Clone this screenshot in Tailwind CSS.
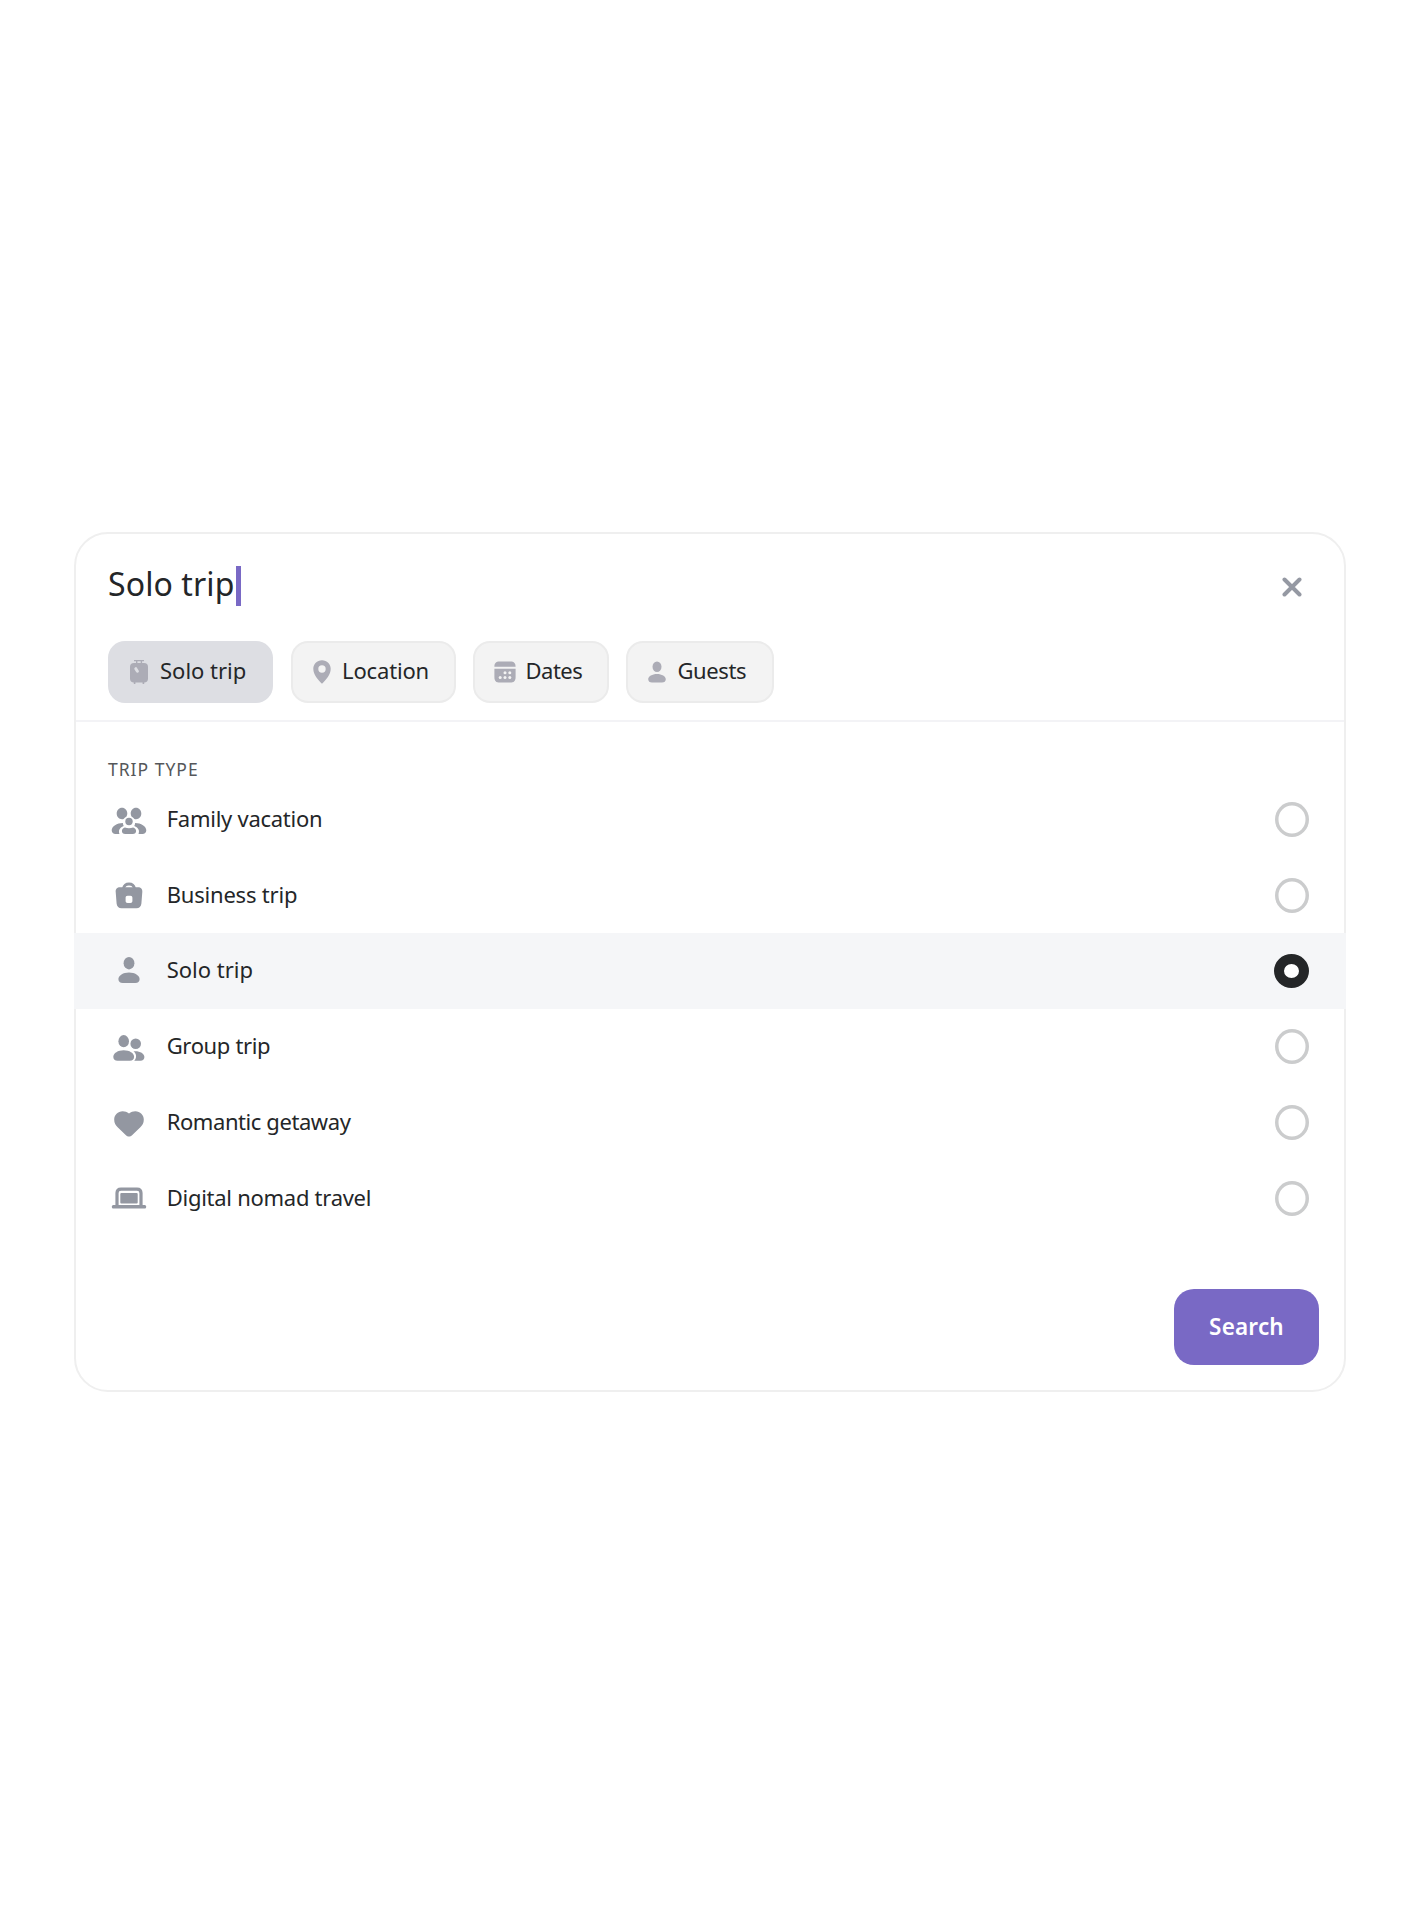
<!DOCTYPE html>
<html lang="en">
<head>
<meta charset="utf-8">
<title>Trip search</title>
<script src="https://cdn.jsdelivr.net/npm/@tailwindcss/browser@4"></script>
</head>
<body class="bg-white font-['Noto_Sans',sans-serif] text-[#242628]">
<main class="h-[1926px] w-[1422px] pl-[74px] pt-[532px]">
<section class="flex h-[860px] w-[1272px] flex-col rounded-[34px] border-2 border-[#efefef]">
  <header class="flex h-[188px] shrink-0 flex-col border-b-2 border-[#f3f3f6] px-8 pt-8">
    <div class="flex h-10 items-center justify-between">
      <div class="flex items-center">
        <span class="-mt-1 w-[128px] whitespace-pre text-[32px] leading-[36px] tracking-[0.1px]">Solo trip</span>
        <span class="h-10 w-[5px] bg-[#7969c5]"></span>
      </div>
      <svg class="mr-[10px] mt-0.5 size-[20px]" viewBox="0 0 20 20" fill="none" stroke="#9599a3" stroke-width="4" stroke-linecap="round"><path d="M2.500 2.500 17.500 17.500M17.500 2.500 2.500 17.500"/></svg>
    </div>
    <nav class="mt-[35px] flex gap-[18px] text-[22px] leading-[58px]">
      <button class="flex h-[62px] w-[165px] items-center rounded-[17px] bg-[#dddee3] pl-[22px]">
        <svg class="h-[26px] w-[18px] shrink-0" viewBox="0 0 18 26" fill="#acacb6"><path d="M4 .9h10v1.300H4zM6 2h1.400v2.500H6zM10.700 2h1.400v2.500h-1.400z"/><path d="M4 4h10a4 4 0 0 1 4 4v11.500a4 4 0 0 1-4 4H4a4 4 0 0 1-4-4V8a4 4 0 0 1 4-4Z"/><path d="m5.800 9.700 1.600 2.500" fill="none" stroke="#dddee3" stroke-width="3" stroke-linecap="round"/><path d="M3.800 23h1.600v2H3.800zM12.600 23h1.600v2h-1.600z"/></svg>
        <span class="-mt-[5px] ml-[12px] whitespace-nowrap">Solo trip</span>
      </button>
      <button class="flex h-[62px] w-[165px] items-center rounded-[17px] border-2 border-[#ebebeb] bg-[#f3f3f3] pl-5">
        <svg class="-mt-px h-[24px] w-[18px] shrink-0" viewBox="0 0 18 24" fill="#acacb6"><path fill-rule="evenodd" d="M9 .3c-5 0-8.700 3.700-8.700 8.500 0 6.200 4.600 10.700 8.700 15 4.100-4.300 8.700-8.800 8.700-15C17.700 4 14 .3 9 .3Zm0 5a3.700 3.700 0 1 1 0 7.400 3.700 3.700 0 0 1 0-7.400Z"/></svg>
        <span class="-mt-[5px] ml-[11px] whitespace-nowrap tracking-[-0.15px]">Location</span>
      </button>
      <button class="-ml-px flex h-[62px] w-[136px] items-center rounded-[17px] border-2 border-[#ebebeb] bg-[#f3f3f3] pl-[18.500px]">
        <svg class="-mt-px size-[22px] shrink-0" viewBox="0 0 22 22" fill="#acacb6"><path d="M.4 5.700C.4 2.500 1.500.5 6 .5h10c4.500 0 5.600 2 5.600 5.200ZM.4 7.700h21.200V16c0 4-1.600 5.600-5.600 5.600H6C2 21.600.4 20 .4 16Z"/><g fill="#f3f3f3"><circle cx="11" cy="11.800" r="1.500"/><circle cx="15.800" cy="11.800" r="1.500"/><circle cx="6.200" cy="16.400" r="1.500"/><circle cx="11" cy="16.400" r="1.500"/><circle cx="15.800" cy="16.400" r="1.500"/></g></svg>
        <span class="-mt-[5px] ml-[10px] whitespace-nowrap tracking-[-0.5px]">Dates</span>
      </button>
      <button class="-ml-px flex h-[62px] w-[148px] items-center rounded-[17px] border-2 border-[#ebebeb] bg-[#f3f3f3] pl-5">
        <svg class="-mt-px h-[22px] w-[18px] shrink-0" viewBox="0 0 18 22" fill="#acacb6"><ellipse cx="9" cy="5.800" rx="4.500" ry="5.300"/><path d="M9 12.900c4.800 0 8.800 2.400 8.800 5.300 0 2-1.500 3.300-3.800 3.300H4C1.700 21.500.2 20.200.2 18.200c0-2.900 4-5.300 8.800-5.300Z"/></svg>
        <span class="-mt-[5px] ml-[11.500px] whitespace-nowrap tracking-[-0.4px]">Guests</span>
      </button>
    </nav>
  </header>

  <h2 class="mt-[37px] h-[23px] shrink-0 pl-8 text-[17.500px] leading-[20px] tracking-[1px] text-[#55575a]">TRIP TYPE</h2>
  <ul class="-mx-[2px] text-[22px]">
    <li class="flex h-[75.700px] items-center pl-[36.700px] pr-[37px]">
      <svg class="size-9" viewBox="0 0 36 36" fill="#9397a1"><path d="M11 5.800c3 0 5.300 2.600 5.300 5.700 0 1.100-.3 2.200-.8 3.100-1.300.7-2.300 1.500-2.900 2.400-3.800 1.100-6.900-1.700-6.900-5.500 0-3.100 2.300-5.700 5.300-5.700ZM25 5.800c-3 0-5.300 2.600-5.300 5.700 0 1.100.3 2.200.8 3.100 1.300.7 2.300 1.500 2.900 2.400 3.800 1.100 6.900-1.700 6.900-5.500 0-3.100-2.300-5.700-5.300-5.700Z"/><circle cx="18" cy="19.500" r="3.700"/><path d="M11.900 20.900C6 21 .7 24.200.7 28.300c0 2.200 1.600 3.700 3.800 3.700h4c-1.300-3.400-.2-6 4.200-8-.5-1-.8-2-.8-3.100ZM24.100 20.900c5.900.1 11.200 3.300 11.200 7.400 0 2.200-1.600 3.700-3.800 3.700h-4c1.300-3.400.2-6-4.200-8 .5-1 .8-2 .8-3.100Z"/><path d="M13.900 25.500c2.500 1 5.700 1 8.200 0 1.600.6 3 1.900 3 3.500 0 1.800-1.300 3-3.300 3h-7.600c-2 0-3.300-1.200-3.300-3 0-1.600 1.400-2.900 3-3.500Z"/></svg>
      <span class="-mt-0.5 ml-[20px] flex-1 tracking-[-0.26px]">Family vacation</span>
      <span class="h-[35px] w-[34px] rounded-[50%] inset-shadow-[0_0_0_3.500px_#cbcccd]"></span>
    </li>
    <li class="flex h-[75.700px] items-center pl-[36.700px] pr-[37px]">
      <svg class="size-9" viewBox="0 0 36 36" fill="#9397a1"><path d="M12.400 10.500c.7-3.100 2.900-4.500 5.600-4.500s4.900 1.400 5.600 4.500" fill="none" stroke="#9397a1" stroke-width="2.800"/><path fill-rule="evenodd" d="M9 9.200h18c2.900 0 4.600 2 4.300 4.800l-.9 11.500c-.3 3.200-2 4.800-5 4.800H10.600c-3 0-4.700-1.600-5-4.800L4.700 14C4.400 11.200 6.100 9.200 9 9.200Zm7.600 8.600c-1.300 0-2 .7-2 2V23c0 1.300.7 2 2 2h2.800c1.300 0 2-.7 2-2v-3.200c0-1.300-.7-2-2-2Z"/></svg>
      <span class="-mt-0.5 ml-[20px] flex-1 tracking-[-0.2px]">Business trip</span>
      <span class="h-[35px] w-[34px] rounded-[50%] inset-shadow-[0_0_0_3.500px_#cbcccd]"></span>
    </li>
    <li class="flex h-[75.700px] items-center bg-[#f5f6f8] pl-[36.700px] pr-[37px]">
      <svg class="size-9" viewBox="0 0 36 36" fill="#9397a1"><ellipse cx="18" cy="10.200" rx="5.400" ry="6.200"/><path d="M18 19.500c5.800 0 10.600 2.900 10.600 6.600 0 2.500-1.600 4-4.300 4H11.700c-2.700 0-4.300-1.500-4.300-4 0-3.700 4.800-6.600 10.600-6.600Z"/></svg>
      <span class="-mt-[3px] ml-[20px] flex-1">Solo trip</span>
      <span class="-mt-px h-[34px] w-[35px] rounded-[50%] border-[10px] border-[#242628] bg-white"></span>
    </li>
    <li class="flex h-[75.700px] items-center pl-[36.700px] pr-[37px]">
      <svg class="size-9" viewBox="0 0 36 36" fill="#9397a1"><ellipse cx="12.700" cy="12.200" rx="5.300" ry="6.100"/><path d="M12.700 21.300c5.700 0 10.400 2.900 10.400 6.500 0 2.500-1.600 4-4.300 4H6.600c-2.700 0-4.300-1.500-4.300-4 0-3.600 4.700-6.500 10.400-6.500Z"/><ellipse cx="24.700" cy="14.800" rx="5.300" ry="5.300"/><path d="M22.500 22.300c5.700-.6 10.900 1.700 10.900 5.700 0 2.400-1.500 3.800-4 3.800h-6.200c2.700-2.800 2.600-6.800-.7-9.500Z"/></svg>
      <span class="-mt-0.5 ml-[20px] flex-1 tracking-[-0.35px]">Group trip</span>
      <span class="h-[35px] w-[34px] rounded-[50%] inset-shadow-[0_0_0_3.500px_#cbcccd]"></span>
    </li>
    <li class="flex h-[75.700px] items-center pl-[36.700px] pr-[37px]">
      <svg class="size-9" viewBox="0 0 36 36" fill="#9397a1"><path d="M18 8.500c2-1.500 4-2.200 6.300-2.200 4.900 0 8.500 3.700 8.500 8.300 0 3.500-1.300 5.800-3.700 8l-7.800 7.400c-2.300 2.100-4.300 2.100-6.600 0L6.900 22.600c-2.400-2.200-3.700-4.500-3.700-8 0-4.600 3.600-8.300 8.500-8.300 2.300 0 4.300.7 6.300 2.200Z"/></svg>
      <span class="-mt-0.5 ml-[20px] flex-1 tracking-[-0.42px]">Romantic getaway</span>
      <span class="h-[35px] w-[34px] rounded-[50%] inset-shadow-[0_0_0_3.500px_#cbcccd]"></span>
    </li>
    <li class="flex h-[75.700px] items-center pl-[36.700px] pr-[37px]">
      <svg class="size-9" viewBox="0 0 36 36" fill="#9397a1"><path d="M6 26V13.100c0-2.700 1.300-4 4-4h16c2.700 0 4 1.300 4 4V26" fill="none" stroke="#9397a1" stroke-width="3.200"/><rect x="9.300" y="13" width="17.400" height="10.600" rx="1"/><rect x=".8" y="25" width="34.400" height="3.600" rx="1.500"/></svg>
      <span class="-mt-0.5 ml-[20px] flex-1 tracking-[-0.27px]">Digital nomad travel</span>
      <span class="h-[35px] w-[34px] rounded-[50%] inset-shadow-[0_0_0_3.500px_#cbcccd]"></span>
    </li>
  </ul>
  <footer class="mb-[25.500px] mr-[25px] mt-auto flex shrink-0 justify-end">
    <button class="h-[76px] w-[145px] rounded-[20px] bg-[#7969c5] text-[22.500px] font-semibold tracking-[0.2px] text-white">Search</button>
  </footer>
</section>
</main>
</body>
</html>
